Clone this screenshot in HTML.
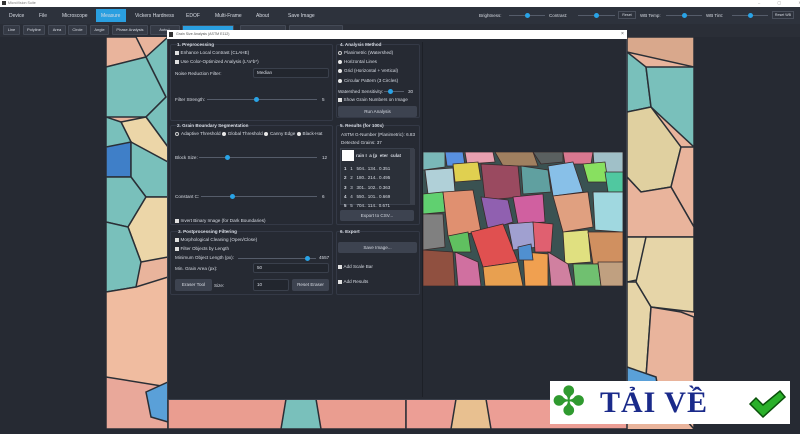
<!DOCTYPE html>
<html><head><meta charset="utf-8"><style>
*{margin:0;padding:0;box-sizing:border-box}
body{width:800px;height:434px;overflow:hidden;background:#262a33;font-family:"Liberation Sans",sans-serif;color:#d8dce4;position:relative}
.a{position:absolute}
.t{font-size:4.6px;white-space:nowrap}
.b{font-weight:bold}
.grp{position:absolute;border:1px solid #343946;border-radius:2px}
.btn{position:absolute;background:#3d4350;border-radius:2px;font-size:4.6px;text-align:center;color:#d8dce4}
.inp{position:absolute;background:#22262e;border:1px solid #3a404c;border-radius:2px;font-size:4.6px;padding-left:3px}
.sl{position:absolute;height:1px;background:#555c6a}
.kn{position:absolute;width:5px;height:5px;border-radius:50%;background:#29a3e6;top:-2px}
.cb{display:inline-block;width:3.5px;height:3.5px;background:#e0e0e0;margin-right:2px;vertical-align:middle}
.rd{display:inline-block;width:4px;height:4px;border-radius:50%;background:#e8e8e8;margin-right:2px;vertical-align:middle}
.tb{position:absolute;top:25px;height:10px;background:#353a45;border:1px solid #444a56;border-radius:1px;font-size:4px;line-height:8px;text-align:center}
</style></head><body>
<div class="a" style="left:0;top:0;width:800px;height:7px;background:#fff"></div>
<div class="a" style="left:2px;top:1px;width:4px;height:4px;background:#333"></div>
<div class="a t" style="left:8px;top:1px;color:#777;font-size:3.6px">MicroVision Suite</div>
<div class="a t" style="left:758px;top:0;color:#888;font-size:4px;letter-spacing:8px">– ▢ ✕</div>
<div class="a" style="left:0;top:7px;width:800px;height:17px;background:#2d323c"></div>
<div class="a" style="left:96px;top:9px;width:30px;height:13px;background:#2a9fe0"></div>
<div class="a t" style="top:13px;left:9px;font-size:5px">Device</div>
<div class="a t" style="top:13px;left:39px;font-size:5px">File</div>
<div class="a t" style="top:13px;left:62px;font-size:5px">Microscope</div>
<div class="a t" style="top:13px;left:101px;font-size:5px">Measure</div>
<div class="a t" style="top:13px;left:135px;font-size:5px">Vickers Hardness</div>
<div class="a t" style="top:13px;left:186px;font-size:5px">EDOF</div>
<div class="a t" style="top:13px;left:215px;font-size:5px">Multi-Frame</div>
<div class="a t" style="top:13px;left:256px;font-size:5px">About</div>
<div class="a t" style="top:13px;left:288px;font-size:5px">Save Image</div>
<div class="a t" style="top:13px;left:479px;font-size:4.5px">Brightness:</div>
<div class="sl" style="left:509px;top:15px;width:36px"><div class="kn" style="left:16px"></div></div>
<div class="a t" style="top:13px;left:549px;font-size:4.5px">Contrast:</div>
<div class="sl" style="left:578px;top:15px;width:37px"><div class="kn" style="left:16px"></div></div>
<div class="a" style="left:618px;top:11px;width:18px;height:8px;border:1px solid #4a505c;font-size:3.6px;text-align:center;line-height:6px">Reset</div>
<div class="a t" style="top:13px;left:640px;font-size:4.5px">WB Temp:</div>
<div class="sl" style="left:666px;top:15px;width:36px"><div class="kn" style="left:16px"></div></div>
<div class="a t" style="top:13px;left:706px;font-size:4.5px">WB Tint:</div>
<div class="sl" style="left:732px;top:15px;width:36px"><div class="kn" style="left:16px"></div></div>
<div class="a" style="left:772px;top:11px;width:22px;height:8px;border:1px solid #4a505c;font-size:3.6px;text-align:center;line-height:6px">Reset WB</div>
<div class="a" style="left:0;top:24px;width:800px;height:13px;background:#2a2e37"></div>
<div class="tb" style="left:3px;width:17px">Line</div>
<div class="tb" style="left:23px;width:22px">Polyline</div>
<div class="tb" style="left:48px;width:18px">Area</div>
<div class="tb" style="left:68px;width:19px">Circle</div>
<div class="tb" style="left:90px;width:19px">Angle</div>
<div class="tb" style="left:112px;width:36px">Phase Analysis</div>
<div class="tb" style="left:150px;width:30px">Auto L</div>
<div class="tb" style="left:182px;width:52px;background:#2a9fe0"></div>
<div class="tb" style="left:240px;width:46px"></div>
<div class="tb" style="left:289px;width:54px"></div>
<svg class="a" style="left:106px;top:37px" width="588" height="392" viewBox="0 0 588 392">
<rect width="588" height="392" fill="#e9b49c"/>
<g stroke="#2a2f36" stroke-width="1.5">
<polygon points="0,0 30,0 40,20 0,30" fill="#e9b49c"/>
<polygon points="0,30 40,20 60,60 40,80 0,80" fill="#79c0bb"/>
<polygon points="40,20 62,0 62,110 40,80 60,60" fill="#79c0bb"/>
<polygon points="15,85 40,80 62,110 62,125 30,115" fill="#ecd6a8"/>
<polygon points="0,80 15,85 30,115 20,135 0,130" fill="#79c0bb"/>
<polygon points="0,110 25,105 25,140 0,140" fill="#3f7fc8"/>
<polygon points="25,105 62,125 62,160 40,160 25,140" fill="#79c0bb"/>
<polygon points="0,140 25,140 40,160 22,190 0,185" fill="#79c0bb"/>
<polygon points="22,190 40,160 62,160 62,220 35,225" fill="#ecd6a8"/>
<polygon points="0,185 22,190 35,225 30,250 0,255" fill="#79c0bb"/>
<polygon points="0,255 30,250 62,240 62,392 0,392" fill="#f0bca0"/>
<polygon points="0,340 62,350 62,392 0,392" fill="#e9a89a"/>
<polygon points="40,355 62,345 62,385 45,380" fill="#5aa0d8"/>
<polygon points="521,0 588,0 588,30 521,15" fill="#d9a88c"/>
<polygon points="521,15 540,30 545,70 521,75" fill="#79c0bb"/>
<polygon points="540,30 588,30 588,110 545,70" fill="#79c0bb"/>
<polygon points="521,75 545,70 575,110 565,150 535,155 521,140" fill="#e0d0a0"/>
<polygon points="575,110 588,110 588,190 565,150" fill="#e9b49c"/>
<polygon points="521,140 535,155 565,150 588,190 588,200 540,200 521,200" fill="#e9b49c"/>
<polygon points="521,200 540,200 545,240 521,245" fill="#e6d5a8"/>
<polygon points="540,200 588,200 588,275 545,270 530,245" fill="#e6d5a8"/>
<polygon points="521,245 530,245 545,270 540,340 521,330" fill="#e6d5a8"/>
<polygon points="545,270 575,275 588,280 588,392 560,360 540,340" fill="#e9b49c"/>
<polygon points="521,330 550,340 555,370 535,378 521,370" fill="#5aa0d8"/>
<polygon points="62,362 300,362 300,392 62,392" fill="#ea9d90"/>
<polygon points="300,362 521,362 521,392 300,392" fill="#ec9e95"/>
<polygon points="180,362 210,362 215,392 175,392" fill="#79c0bb"/>
<polygon points="350,362 380,362 385,392 345,392" fill="#e8c090"/>
</g></svg>
<div class="a" style="left:167px;top:30px;width:460px;height:370px;background:#262a33;border:1px solid #3a3f4a"></div>
<div class="a" style="left:167px;top:30px;width:460px;height:9px;background:#fff"></div>
<div class="a" style="left:169px;top:32px;width:4px;height:5px;background:#333"></div>
<div class="a t" style="left:176px;top:32px;color:#555;font-size:3.6px">Grain Size Analysis (ASTM E112)</div>
<div class="a t" style="left:621px;top:31px;color:#555;font-size:5px">×</div>
<div class="a" style="left:422px;top:42px;width:1px;height:355px;background:#1d2027"></div>
<div class="grp" style="left:170px;top:44px;width:163px;height:77px"></div>
<div class="a t b" style="left:177px;top:42px">1. Preprocessing</div>
<div class="a t" style="left:175px;top:50px"><span class="cb"></span>Enhance Local Contrast (CLAHE)</div>
<div class="a t" style="left:175px;top:59px"><span class="cb"></span>Use Color-Optimized Analysis (L*a*b*)</div>
<div class="a t" style="left:175px;top:71px">Noise Reduction Filter:</div>
<div class="inp" style="left:253px;top:68px;width:76px;height:10px;line-height:8px">Median</div>
<div class="a t" style="left:175px;top:97px">Filter Strength:</div>
<div class="sl" style="left:207px;top:99px;width:110px"><div class="kn" style="left:47px"></div></div>
<div class="a t" style="left:322px;top:97px">5</div>
<div class="grp" style="left:170px;top:125px;width:163px;height:100px"></div>
<div class="a t b" style="left:177px;top:123px">2. Grain Boundary Segmentation</div>
<div class="a t" style="left:175px;top:131px"><span class="rd" style="background:none;border:1px solid #ccc"></span>Adaptive Threshold <span class="rd"></span>Global Threshold <span class="rd"></span>Canny Edge <span class="rd"></span>Black-Hat</div>
<div class="a t" style="left:175px;top:155px">Block Size:</div>
<div class="sl" style="left:199px;top:157px;width:118px"><div class="kn" style="left:26px"></div></div>
<div class="a t" style="left:322px;top:155px">12</div>
<div class="a t" style="left:175px;top:194px">Constant C:</div>
<div class="sl" style="left:201px;top:196px;width:116px"><div class="kn" style="left:29px"></div></div>
<div class="a t" style="left:322px;top:194px">6</div>
<div class="a t" style="left:175px;top:218px"><span class="cb"></span>Invert Binary Image (for Dark Boundaries)</div>
<div class="grp" style="left:170px;top:231px;width:163px;height:64px"></div>
<div class="a t b" style="left:178px;top:229px">3. Postprocessing Filtering</div>
<div class="a t" style="left:175px;top:237px"><span class="cb"></span>Morphological Cleaning (Open/Close)</div>
<div class="a t" style="left:175px;top:246px"><span class="cb"></span>Filter Objects by Length</div>
<div class="a t" style="left:175px;top:255px">Minimum Object Length (px):</div>
<div class="sl" style="left:238px;top:258px;width:78px"><div class="kn" style="left:67px"></div></div>
<div class="a t" style="left:319px;top:255px">4557</div>
<div class="a t" style="left:175px;top:266px">Min. Grain Area (px):</div>
<div class="inp" style="left:253px;top:263px;width:76px;height:10px;line-height:8px">50</div>
<div class="btn" style="left:175px;top:279px;width:37px;height:12px;line-height:12px">Eraser Tool</div>
<div class="a t" style="left:214px;top:283px">Size:</div>
<div class="inp" style="left:253px;top:279px;width:36px;height:12px;line-height:10px">10</div>
<div class="btn" style="left:292px;top:279px;width:37px;height:12px;line-height:12px">Reset Eraser</div>
<div class="grp" style="left:336px;top:44px;width:84px;height:74px"></div>
<div class="a t b" style="left:340px;top:42px">4. Analysis Method</div>
<div class="a t" style="left:338px;top:50px"><span class="rd" style="background:none;border:1px solid #ccc"></span>Planimetric (Watershed)</div>
<div class="a t" style="left:338px;top:59px"><span class="rd"></span>Horizontal Lines</div>
<div class="a t" style="left:338px;top:68px"><span class="rd"></span>Grid (Horizontal + Vertical)</div>
<div class="a t" style="left:338px;top:78px"><span class="rd"></span>Circular Pattern (3 Circles)</div>
<div class="a t" style="left:338px;top:89px">Watershed Sensitivity:</div>
<div class="sl" style="left:384px;top:91px;width:20px"><div class="kn" style="left:4px"></div></div>
<div class="a t" style="left:408px;top:89px">30</div>
<div class="a t" style="left:338px;top:97px"><span class="cb"></span>Show Grain Numbers on Image</div>
<div class="btn" style="left:338px;top:106px;width:79px;height:11px;line-height:11px">Run Analysis</div>
<div class="grp" style="left:336px;top:125px;width:84px;height:100px"></div>
<div class="a t b" style="left:340px;top:123px">5. Results (for 100x)</div>
<div class="a t" style="left:341px;top:132px">ASTM G-Number (Planimetric): 6.83</div>
<div class="a t" style="left:341px;top:140px">Detected Grains: 37</div>
<div class="a" style="left:340px;top:148px;width:74px;height:57px;background:#2b3039;border:1px solid #3a404c;font-size:4.5px">
<div class="a" style="left:1px;top:1px;width:12px;height:11px;background:#fff"></div>
<div class="a" style="left:69px;top:0;width:5px;height:56px;background:#3a3f4a"></div>
<div class="a" style="left:15px;top:4px;white-space:nowrap;font-weight:bold">rain I&nbsp; a (p&nbsp; eter&nbsp; culat</div>
<div class="a" style="left:3px;top:15px;white-space:pre;line-height:9.3px"><b>1</b>   1   504.. 134.. 0.351
<b>2</b>   2   180.. 214.. 0.495
<b>3</b>   3   301.. 102.. 0.363
<b>4</b>   4   550.. 101.. 0.669
<b>5</b>   5   704.. 114.. 0.671</div>
</div>
<div class="btn" style="left:340px;top:210px;width:74px;height:11px;line-height:11px">Export to CSV...</div>
<div class="grp" style="left:336px;top:231px;width:84px;height:64px"></div>
<div class="a t b" style="left:340px;top:229px">6. Export</div>
<div class="btn" style="left:338px;top:242px;width:79px;height:11px;line-height:11px">Save Image...</div>
<div class="a t" style="left:338px;top:264px"><span class="cb"></span>Add Scale Bar</div>
<div class="a t" style="left:338px;top:279px"><span class="cb"></span>Add Results</div>
<svg class="a" style="left:423px;top:152px" width="200" height="134" viewBox="0 0 200 134">
<rect width="200" height="134" fill="#3a5252"/>
<g stroke="#3a2a2a" stroke-width="0.8">
<polygon points="0,0 22,0 22,15 0,18" fill="#7ab8b8"/><polygon points="22,0 40,0 42,14 24,14" fill="#5890e0"/>
<polygon points="42,0 70,0 72,10 44,12" fill="#e8a0b0"/><polygon points="72,0 110,0 115,14 80,14" fill="#a08060"/>
<polygon points="110,0 140,0 140,10 118,12" fill="#5a6060"/><polygon points="140,0 170,0 168,12 142,12" fill="#d87890"/>
<polygon points="170,0 200,0 200,30 172,25" fill="#a0c0c8"/><polygon points="30,12 55,10 58,28 32,30" fill="#e0d050"/>
<polygon points="2,18 30,16 32,40 5,42" fill="#b0d0d8"/><polygon points="58,12 95,14 98,45 62,48" fill="#9a4a60"/>
<polygon points="98,14 125,18 128,40 100,42" fill="#60a0a0"/><polygon points="125,14 150,10 160,40 130,44" fill="#88c0e8"/>
<polygon points="160,12 182,10 185,30 165,30" fill="#88e060"/><polygon points="182,20 200,20 200,40 185,40" fill="#50c8a0"/>
<polygon points="0,42 20,40 22,60 0,62" fill="#60d070"/><polygon points="20,40 50,38 58,80 25,84" fill="#e09070"/>
<polygon points="58,45 85,48 90,70 65,78" fill="#9060b0"/><polygon points="90,45 120,42 122,70 95,72" fill="#d060a0"/>
<polygon points="130,44 165,40 170,75 140,80" fill="#e0a080"/><polygon points="170,40 200,40 200,80 172,78" fill="#a0d8e0"/>
<polygon points="0,62 20,62 22,95 0,98" fill="#808080"/><polygon points="25,84 45,80 48,100 30,100" fill="#60c060"/>
<polygon points="48,80 80,72 95,110 60,115" fill="#e05050"/><polygon points="85,72 110,70 115,95 90,98" fill="#a0a0d0"/>
<polygon points="110,70 130,72 128,100 112,100" fill="#e06070"/><polygon points="140,80 165,78 168,110 142,112" fill="#e0e080"/>
<polygon points="165,80 200,80 200,110 170,112" fill="#d09060"/><polygon points="0,98 30,100 32,134 0,134" fill="#905040"/>
<polygon points="32,100 55,110 58,134 35,134" fill="#d070a0"/><polygon points="60,115 95,110 100,134 62,134" fill="#e8a050"/>
<polygon points="100,100 125,102 125,134 102,134" fill="#f0a050"/><polygon points="125,100 145,112 150,134 128,134" fill="#d080a0"/>
<polygon points="150,112 175,112 178,134 152,134" fill="#70c070"/><polygon points="175,110 200,110 200,134 178,134" fill="#c0a080"/>
<polygon points="95,95 108,92 110,108 96,108" fill="#5090d0"/>
</g></svg>
<div class="a" style="left:550px;top:381px;width:240px;height:43px;background:#fff"></div>
<div class="a" style="left:552px;top:380px;font-size:40px;line-height:44px;color:#2f9a2f">✤</div>
<div class="a" style="left:600px;top:383px;font-family:'Liberation Serif',serif;font-weight:bold;font-size:30px;line-height:40px;color:#1a2a8a;letter-spacing:1px">TẢI VỀ</div>
<svg class="a" style="left:748px;top:390px" width="38" height="28" viewBox="0 0 38 28"><path d="M2 14 L8 8 L15 15 L32 1 L37 7 L15 27 Z" fill="#2ab02a" stroke="#0a500a" stroke-width="1.5"/></svg>
</body></html>
